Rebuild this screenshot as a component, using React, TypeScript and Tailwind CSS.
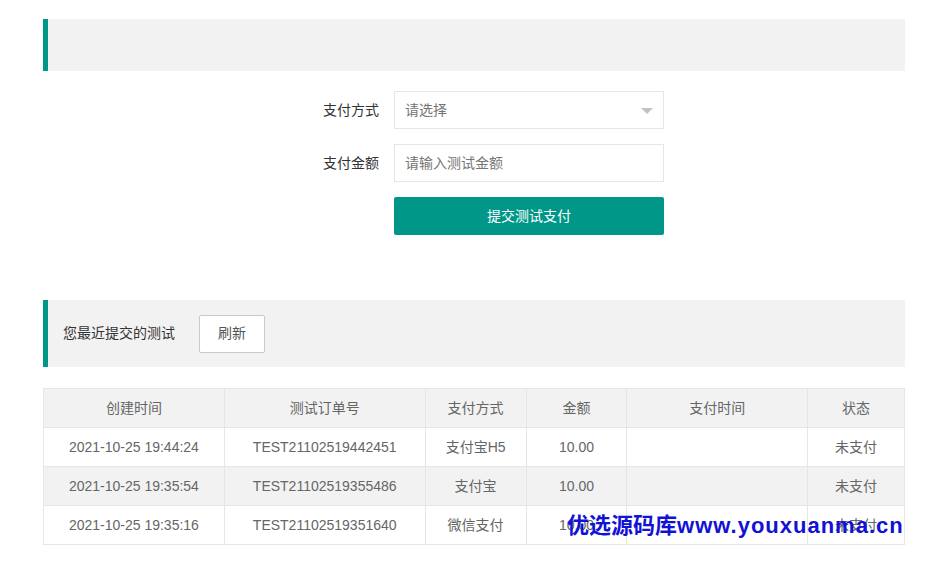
export default function App() {
  const rows = [
    { created: "2021-10-25 19:44:24", order: "TEST21102519442451", method: "支付宝H5", amount: "10.00", paid: "", status: "未支付" },
    { created: "2021-10-25 19:35:54", order: "TEST21102519355486", method: "支付宝", amount: "10.00", paid: "", status: "未支付" },
    { created: "2021-10-25 19:35:16", order: "TEST21102519351640", method: "微信支付", amount: "10.00", paid: "", status: "未支付" },
  ];
  const heads = ["创建时间", "测试订单号", "支付方式", "金额", "支付时间", "状态"];
  const widths = ["w-[181px]", "w-[201px]", "w-[101px]", "w-[101px]", "w-[181px]", "w-[97px]"];

  return (
    <main
      className="relative min-h-screen bg-white pt-[19px] text-[14px] text-[#333]"
      style={{ fontFamily: '"Liberation Sans", "Noto Sans CJK SC", sans-serif' }}
    >
      <div className="ml-[43px] w-[862px]">
        {/* top quote */}
        <div className="h-[52px] border-l-[5px] border-[#009688] bg-[#f2f2f2]" />

        {/* form */}
        <div className="mt-[20px] flex flex-col gap-[15px]">
          <div className="flex items-center">
            <label className="w-[351px] pr-[15px] text-right">支付方式</label>
            <div className="relative flex h-[38px] w-[270px] items-center border border-[#e6e6e6] pl-[10px] text-[#757575]">
              请选择
              <span className="absolute right-[10px] top-[16px] h-0 w-0 border-x-[6px] border-t-[6px] border-x-transparent border-t-[#c2c2c2]" />
            </div>
          </div>
          <div className="flex items-center">
            <label className="w-[351px] pr-[15px] text-right">支付金额</label>
            <input
              className="h-[38px] w-[270px] border border-[#e6e6e6] pl-[10px] text-[#333] outline-none placeholder:text-[#757575]"
              placeholder="请输入测试金额"
            />
          </div>
          <div className="flex">
            <button className="ml-[351px] h-[38px] w-[270px] rounded-[2px] bg-[#009688] text-white">
              提交测试支付
            </button>
          </div>
        </div>

        {/* recent quote */}
        <div className="mt-[65px] flex h-[67px] items-center border-l-[5px] border-[#009688] bg-[#f2f2f2] pl-[15px]">
          <span>您最近提交的测试</span>
          <button className="ml-[24px] h-[38px] w-[66px] rounded-[2px] border border-[#c9c9c9] bg-white text-[#555]">
            刷新
          </button>
        </div>

        {/* table */}
        <table className="mt-[21px] w-[862px] border-collapse text-center text-[#666]">
          <thead>
            <tr className="bg-[#f2f2f2]">
              {heads.map((h, i) => (
                <th key={h} className={`${widths[i]} h-[39px] border border-[#e6e6e6] font-normal`}>
                  {h}
                </th>
              ))}
            </tr>
          </thead>
          <tbody>
            {rows.map((r, i) => (
              <tr key={r.order} className={i % 2 === 1 ? "bg-[#f2f2f2]" : "bg-white"}>
                <td className="h-[39px] border border-[#e6e6e6]">{r.created}</td>
                <td className="border border-[#e6e6e6]">{r.order}</td>
                <td className="border border-[#e6e6e6]">{r.method}</td>
                <td className="border border-[#e6e6e6]">{r.amount}</td>
                <td className="border border-[#e6e6e6]">{r.paid}</td>
                <td className="border border-[#e6e6e6]">{r.status}</td>
              </tr>
            ))}
          </tbody>
        </table>
      </div>

      {/* watermark */}
      <div className="absolute left-[567px] top-[512px] whitespace-nowrap text-[22px] font-bold leading-[28px] text-[#1212d6]">
        优选源码库<span className="tracking-[1px]">www.youxuanma.cn</span>
      </div>
    </main>
  );
}
